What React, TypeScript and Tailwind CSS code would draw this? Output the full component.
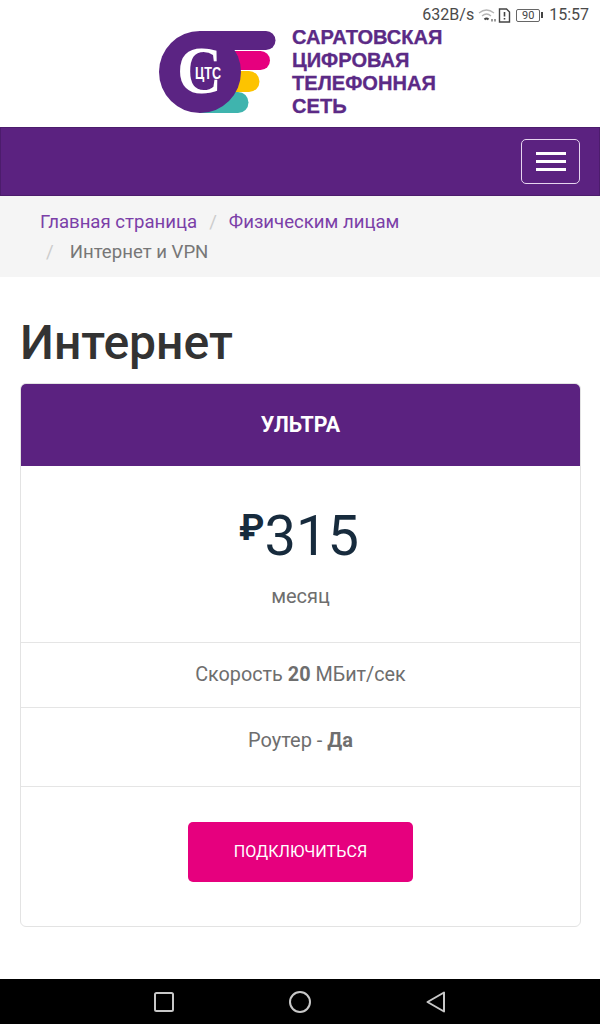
import React from "react";

function StatusBar() {
  return (
    <div className="h-[30px] bg-white flex items-center justify-end pr-[11px] text-[#4a4a4a] text-[16px] font-['Roboto',sans-serif]">
      <span>632B/s</span>
      <svg className="ml-[4px]" width="19" height="14" viewBox="0 0 19 14" fill="none" stroke="#b5b5b5" strokeWidth="1.3">
        <path d="M1 5 Q8.500 -1 16 5" />
        <path d="M4 8 Q8.500 4 13 8" />
        <path d="M6.500 11.500 Q8.500 9.500 10.500 11.500" stroke="#444" strokeWidth="2" />
        <path d="M14 11v2.500M17 11v2.500" stroke="#666" />
      </svg>
      <svg className="ml-[1px]" width="13" height="15" viewBox="0 0 13 15" fill="none" stroke="#444" strokeWidth="1.4">
        <path d="M1.500 1h7l3 3v10h-10z" />
        <path d="M6.500 4v4.500M6.500 10v1.600" strokeWidth="1.600" />
      </svg>
      <div className="flex items-center ml-[5px]">
        <div className="w-[24px] h-[13px] border border-[#666] rounded-[2px] text-[11px] leading-[11px] text-center text-[#444]">
          90
        </div>
        <div className="w-[2px] h-[6px] ml-[1px] bg-[#444]" />
      </div>
      <span className="ml-[6px]">15:57</span>
    </div>
  );
}

function LogoMark() {
  return (
    <svg width="118" height="84" viewBox="0 0 118 84">
      <path d="M40 0H107A9.500 9.500 0 0 1 107 19H40Z" fill="#5b2483" />
      <path d="M60 20H101.500A9.500 9.500 0 0 1 101.500 39H60Z" fill="#e6007e" />
      <path d="M60 40H90A10.500 10.500 0 0 1 90 61H60Z" fill="#fdc300" />
      <path d="M40 61H79A10.500 10.500 0 0 1 79 82H40Z" fill="#3fb4ae" />
      <circle cx="41" cy="41" r="41" fill="#5b2483" />
      <text x="18" y="62" fontSize="68" fontWeight="700" fontFamily="'Liberation Serif',serif" fill="#fff" textLength="45" lengthAdjust="spacingAndGlyphs">С</text>
      <text x="36" y="48" fontSize="16" fontWeight="700" fontFamily="'Liberation Sans',sans-serif" fill="#fff" textLength="26" lengthAdjust="spacingAndGlyphs">ЦТС</text>
    </svg>
  );
}

function Header() {
  return (
    <div className="h-[97px] bg-white flex justify-center gap-[15px] overflow-hidden">
      <div className="pt-[1px]">
        <LogoMark />
      </div>
      <div className="-mt-[4px] text-[#5b2a86] text-[20.100px] leading-[23px] font-bold font-['Liberation_Sans',sans-serif] [-webkit-text-stroke:0.300px_#5b2a86] w-[149px] whitespace-nowrap">
        <div>САРАТОВСКАЯ</div>
        <div>ЦИФРОВАЯ</div>
        <div>ТЕЛЕФОННАЯ</div>
        <div>СЕТЬ</div>
      </div>
    </div>
  );
}

function Navbar() {
  return (
    <div className="h-[69px] bg-[#5b2280] border border-[#4c1c6c] flex items-center justify-end pr-[19px]">
      <button className="w-[59px] h-[45px] border border-[#e6d5ef] rounded-[5px] flex flex-col items-center justify-center gap-[5px]">
        <span className="block w-[30px] h-[3px] bg-white" />
        <span className="block w-[30px] h-[3px] bg-white" />
        <span className="block w-[30px] h-[3px] bg-white" />
      </button>
    </div>
  );
}

function Breadcrumb() {
  return (
    <div className="h-[81px] bg-[#f5f5f5] pl-[40px] pt-[11px] text-[18.600px] leading-[30px] font-['Roboto',sans-serif]">
      <div className="flex">
        <span className="text-[#7b3fa8]">Главная страница</span>
        <span className="text-[#ccc] px-[12px]">/</span>
        <span className="text-[#7b3fa8]">Физическим лицам</span>
      </div>
      <div className="flex text-[#777]">
        <span className="text-[#ccc] pl-[6px] pr-[16px]">/</span>
        <span>Интернет и VPN</span>
      </div>
    </div>
  );
}

function PriceCard() {
  return (
    <div className="ml-[20px] w-[561px] h-[544px] border border-[#e3e3e3] rounded-[6px] overflow-hidden flex flex-col text-center">
      <div className="h-[82px] pb-[1px] bg-[#5b2280] flex items-center justify-center text-white text-[21.330px] font-bold">
        УЛЬТРА
      </div>
      <div className="h-[177px] border-b border-[#e5e5e5] flex flex-col items-center pt-[35px]">
        <div className="flex items-start justify-center pr-[3px] text-[#172b3d] text-[56px] leading-[70px]">
          <span className="text-[36px] leading-[54px] font-bold">₽</span>
          <span>315</span>
        </div>
        <div className="mt-[11px] text-[#6e6e6e] text-[20px] leading-[28px]">месяц</div>
      </div>
      <div className="h-[65px] border-b border-[#e5e5e5] flex items-center justify-center text-[#6e6e6e] text-[19.800px]">
        <span>
          Скорость <b>20</b> МБит/сек
        </span>
      </div>
      <div className="h-[79px] border-b border-[#e5e5e5] pt-[17px] text-[#6e6e6e] text-[20px] leading-[30px]">
        Роутер - <b>Да</b>
      </div>
      <div className="flex-1 flex justify-center pt-[35px]">
        <button className="w-[225px] h-[60px] pt-[1px] bg-[#e6007e] rounded-[5px] text-white text-[16.100px]">
          ПОДКЛЮЧИТЬСЯ
        </button>
      </div>
    </div>
  );
}

function NavKeys() {
  return (
    <div className="h-[45px] bg-black flex items-center justify-center gap-[115px]">
      <svg width="20" height="20" viewBox="0 0 20 20" fill="none" stroke="#c8c8c8" strokeWidth="2">
        <rect x="1" y="1" width="18" height="18" rx="1.500" />
      </svg>
      <svg width="22" height="22" viewBox="0 0 22 22" fill="none" stroke="#c8c8c8" strokeWidth="2">
        <circle cx="11" cy="11" r="10" />
      </svg>
      <svg width="20" height="22" viewBox="0 0 20 22" fill="none" stroke="#c8c8c8" strokeWidth="2" strokeLinejoin="round">
        <path d="M18 1.500V20.500L1.500 11Z" />
      </svg>
    </div>
  );
}

export default function App() {
  return (
    <div className="w-[600px] h-[1024px] bg-white flex flex-col overflow-hidden font-['Roboto',sans-serif]">
      <StatusBar />
      <Header />
      <Navbar />
      <Breadcrumb />
      <h1 className="pl-[20px] pt-[36px] h-[106px] text-[#333] text-[48px] leading-[60px] font-medium">
        Интернет
      </h1>
      <PriceCard />
      <div className="flex-1" />
      <NavKeys />
    </div>
  );
}
